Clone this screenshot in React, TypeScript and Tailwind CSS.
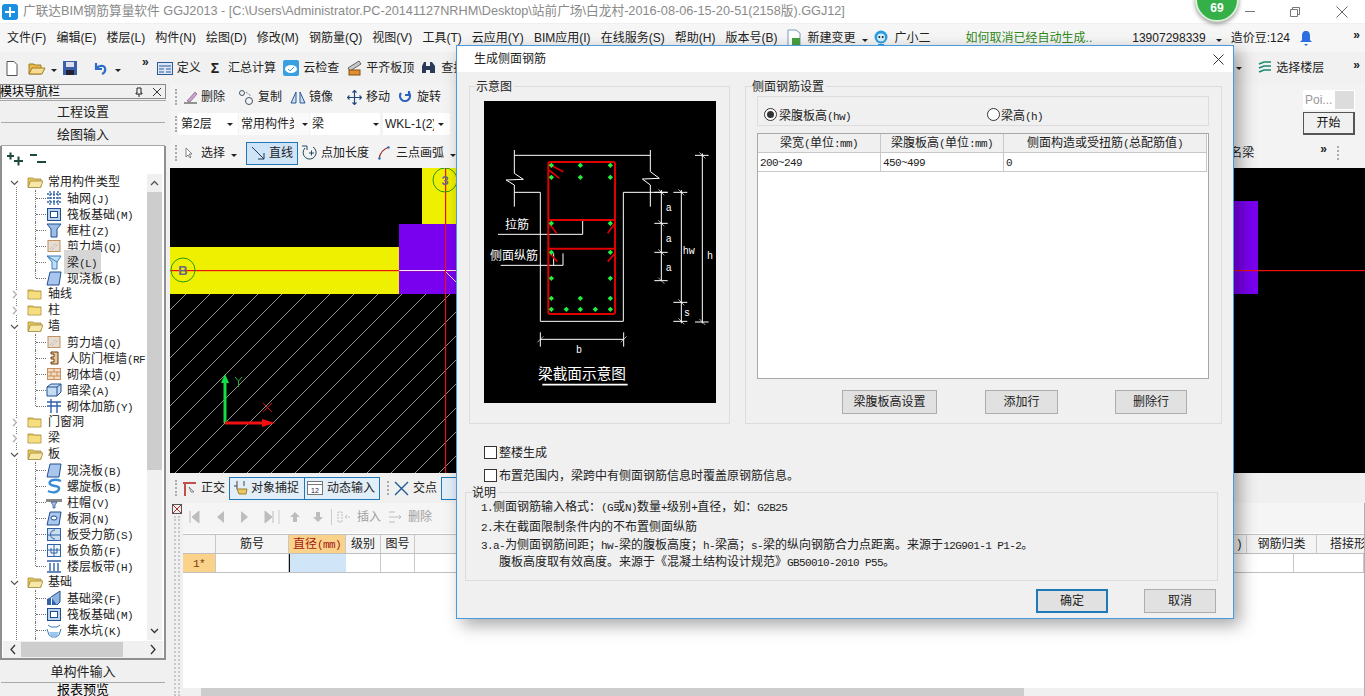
import * as React from 'react';

const SANS = "[font-family:'Liberation_Sans','Noto_Sans_CJK_SC',sans-serif]";
const MONO = "[font-family:'Liberation_Mono','Noto_Sans_CJK_SC',monospace]";

// CJK at 12px, latin half-width like SimSun in the original
function Sim({ text }: { text: string }) {
    const parts = text.split(/([\x00-\x7f]+)/).filter(Boolean);
    return (
        <span className="whitespace-pre text-[12px] leading-4">
            {parts.map((p, i) =>
                /^[\x00-\x7f]/.test(p) ? (
                    <span key={i} className={`${MONO} text-[11px] tracking-[-0.6px]`}>{p}</span>
                ) : (
                    <span key={i}>{p}</span>
                )
            )}
        </span>
    );
}

function Ic({ children, w = 16, h = 16 }: { children: React.ReactNode; w?: number; h?: number }) {
    return (
        <svg width={w} height={h} viewBox={`0 0 ${w} ${h}`} className="shrink-0" fill="none">
            {children}
        </svg>
    );
}

function Caret() {
    return <span className="inline-block w-0 h-0 border-x-[3px] border-x-transparent border-t-[3px] border-t-[#222] shrink-0" />;
}

function Sep() {
    return <span className="w-px h-[20px] bg-[#c4c4c4] shrink-0" />;
}

function Grip() {
    return <span className="w-[2px] h-[16px] shrink-0 border-l-2 border-dotted border-[#aaa]" />;
}

function Chevrons() {
    return <span className={`${SANS} text-[12px] font-bold leading-none text-[#222]`}>»</span>;
}

function Folder({ open }: { open?: boolean }) {
    return (
        <Ic>
            <path d="M1 4h5l1 1h7v8H1z" fill="#e8c65a" stroke="#a08838" strokeWidth="0.8" />
            {open ? (
                <path d="M3.5 7H16l-2.5 6.5H1z" fill="#f7e8a8" stroke="#a08838" strokeWidth="0.8" />
            ) : (
                <rect x="1.5" y="6" width="12" height="6.5" fill="#f6dd80" />
            )}
        </Ic>
    );
}

function TreeIcon({ kind }: { kind: string }) {
    const b = '#2f62a8';
    switch (kind) {
        case 'grid':
            return <Ic><path d="M1 4h14M1 8h14M1 12h14M4 1v14M8 1v14M12 1v14" stroke={b} strokeWidth="1.3" strokeDasharray="2 1" /></Ic>;
        case 'raft':
            return <Ic><rect x="1.5" y="2.5" width="13" height="12" fill="#bcd3ee" stroke="#1f4f90" /><rect x="4.5" y="5.5" width="7" height="6" fill="#fff" stroke="#1f4f90" /></Ic>;
        case 'column':
            return <Ic><path d="M1 2h14l-4 5v8H5V7z" fill="#9dbde6" stroke="#1f4f90" /></Ic>;
        case 'wall':
            return <Ic><rect x="2" y="2.5" width="12" height="11" fill="#e8ddd2" stroke="#c09060" /><path d="M4 11l6-6M6 12l6-6" stroke="#aaa" strokeDasharray="1 1" /></Ic>;
        case 'beam':
            return <Ic><path d="M1 2h14l-4 6v7H6V8z" fill="#bfe0f2" stroke="#3a7cc0" /><path d="M1 2l10 6" stroke="#3a7cc0" /></Ic>;
        case 'slab':
            return <Ic><path d="M4 2h11l-2 13H1z" fill="#a9c6ee" stroke="#1f4f90" /></Ic>;
        case 'door':
            return <Ic><path d="M5 2h7v12H5v-2h3v-3H5V7h3V4H5z" fill="#e9c9a0" stroke="#6a3a10" /></Ic>;
        case 'brick':
            return <Ic><rect x="1.5" y="2.5" width="13" height="11" fill="#f4dcc0" stroke="#c89060" /><path d="M2 6h12M2 10h12M8 3v3M5 6v4M11 6v4M8 10v3" stroke="#c89060" /></Ic>;
        case 'dark':
            return <Ic><path d="M1 5l4-3h10v8l-4 4H1z" fill="#c6dcf2" stroke="#1f4f90" /><path d="M1 5h10v9M11 5l4-3" stroke="#1f4f90" /></Ic>;
        case 'bar':
            return <Ic><path d="M1 4h14M1 8h14M5 1v14M11 4v11" stroke={b} strokeWidth="1.4" /></Ic>;
        case 'spiral':
            return <Ic><path d="M15 3C8 0 2 3 4 6s10 1 9 5-7 4-11 2" stroke="#3a8cd8" strokeWidth="2.4" /></Ic>;
        case 'cap':
            return <Ic><path d="M0 5h16v3H0z" fill="#8a8a8a" /><path d="M5 8h6l-2 3v3H7v-3z" fill="#a8c4e0" stroke="#1f4f90" strokeWidth="0.7" /></Ic>;
        case 'hole':
            return <Ic><path d="M4 2h11l-2 13H1z" fill="#a9c6ee" stroke="#1f4f90" /><ellipse cx="8" cy="8" rx="3" ry="2" fill="#fff" stroke="#1f4f90" /></Ic>;
        case 'sbar':
            return <Ic><rect x="1.5" y="2.5" width="13" height="12" fill="#c9dcf0" stroke="#2f62a8" /><path d="M2 9h12M9 4a3 3 0 1 0 0 9" stroke="#2f62a8" /></Ic>;
        case 'neg':
            return <Ic><rect x="1.5" y="2.5" width="13" height="12" fill="#eef4fb" stroke="#2f62a8" /><path d="M2 8h12M8 3v11M5 6v5h6V6" stroke="#2f62a8" /></Ic>;
        case 'band':
            return <Ic><path d="M1 3h14M1 14h14M4 5v8M8 5v8M12 5v8" stroke={b} strokeWidth="1.4" /></Ic>;
        case 'fbeam':
            return <Ic><path d="M1 15V9l4-2v8zM6 15V8l3-2 2 2v7z" fill="#2f62a8" /><path d="M5 7l9-6v11l-3 3" fill="#8fb4e0" stroke="#1f4f90" /></Ic>;
        default:
            return <Ic><path d="M2 3l3 2h6l3-2M1 7l2 6 3 2h4l3-2 2-6" stroke="#3a7cc0" /><path d="M3 10h10l-2 4H5z" fill="#9cc6ee" /></Ic>;
    }
}

type Node = { label: string; open?: boolean; items?: [string, string][] };

const tree: Node[] = [
    {
        label: '常用构件类型', open: true, items: [
            ['grid', '轴网(J)'], ['raft', '筏板基础(M)'], ['column', '框柱(Z)'],
            ['wall', '剪力墙(Q)'], ['beam', '梁(L)'], ['slab', '现浇板(B)'],
        ],
    },
    { label: '轴线' },
    { label: '柱' },
    {
        label: '墙', open: true, items: [
            ['wall', '剪力墙(Q)'], ['door', '人防门框墙(RF'], ['brick', '砌体墙(Q)'],
            ['dark', '暗梁(A)'], ['bar', '砌体加筋(Y)'],
        ],
    },
    { label: '门窗洞' },
    { label: '梁' },
    {
        label: '板', open: true, items: [
            ['slab', '现浇板(B)'], ['spiral', '螺旋板(B)'], ['cap', '柱帽(V)'], ['hole', '板洞(N)'],
            ['sbar', '板受力筋(S)'], ['neg', '板负筋(F)'], ['band', '楼层板带(H)'],
        ],
    },
    {
        label: '基础', open: true, items: [
            ['fbeam', '基础梁(F)'], ['raft', '筏板基础(M)'], ['pit', '集水坑(K)'], ['cap', '柱墩(Y)'],
        ],
    },
];

function Tree() {
    return (
        <div className="relative flex-1 overflow-hidden text-[#222]">
            <span className="absolute left-[14px] top-[12px] bottom-0 border-l border-dotted border-[#777]" />
            {tree.map((n) => (
                <div key={n.label}>
                    <div className="relative flex items-center h-4">
                        <span className="w-[9px] ml-[8px] flex justify-center bg-white z-10">
                            <svg width="9" height="9" viewBox="0 0 9 9" fill="none">
                                {n.open
                                    ? <path d="M1 3l3.5 3.5L8 3" stroke="#555" strokeWidth="1.2" />
                                    : <path d="M3 1l3.5 3.5L3 8" stroke="#aaa" strokeWidth="1.2" />}
                            </svg>
                        </span>
                        <span className="ml-[8px] mr-[5px]"><Folder open={n.open} /></span>
                        <Sim text={n.label} />
                    </div>
                    {n.items?.map(([kind, label], i) => {
                        const last = i === (n.items?.length ?? 0) - 1;
                        return (
                            <div key={label + i} className="relative flex items-center h-4 pl-[44px]">
                                <span className={`absolute left-[33px] top-0 border-l border-dotted border-[#777] ${last ? 'h-2' : 'h-4'}`} />
                                <span className="absolute left-[34px] top-2 w-[10px] border-t border-dotted border-[#777]" />
                                <TreeIcon kind={kind} />
                                <span className={`ml-[2px] pl-[3px] pr-[4px] ${label === '梁(L)' ? 'bg-[#d6d6d6]' : ''}`}>
                                    <Sim text={label} />
                                </span>
                            </div>
                        );
                    })}
                </div>
            ))}
        </div>
    );
}

function PanelButton({ children }: { children: React.ReactNode }) {
    return (
        <div className="h-[22px] mx-[1px] flex items-center justify-center bg-[#f0f0f0] border-b border-[#a8a8a8] text-[13px] text-[#222]">
            {children}
        </div>
    );
}

function LeftPanel() {
    return (
        <aside className={`w-[166px] shrink-0 flex flex-col ${SANS}`}>
            <div className="h-[15px] flex items-center border border-[#8a8a8a] bg-[#f0f0f0] text-[12px] leading-none">
                <span className="flex-1 -ml-[1px]">模块导航栏</span>
                <svg width="8" height="10" viewBox="0 0 8 10" className="mr-[10px]"><path d="M2 1h4v5h1v1H1V6h1zM4 7v3" stroke="#222" fill="none" /></svg>
                <svg width="8" height="8" viewBox="0 0 8 8" className="mr-[4px]"><path d="M0 0l8 8M8 0L0 8" stroke="#333" /></svg>
            </div>
            <div className="mt-[1px] border-t border-[#a8a8a8]">
                <PanelButton>工程设置</PanelButton>
                <div className="h-[1px]" />
                <PanelButton>绘图输入</PanelButton>
            </div>
            <div className="flex-1 flex flex-col border-x-2 border-b-2 border-[#8f8f8f] border-t-0 min-h-0 bg-white">
                <div className="h-[28px] flex items-center gap-[6px] pl-[5px] pb-[4px] shrink-0">
                    <svg width="17" height="15" viewBox="0 0 17 15"><path d="M0 5h7M3.5 1.5v7M7 10h9M11.5 5.5v9" stroke="#1d4a3a" strokeWidth="2" /></svg>
                    <svg width="16" height="11" viewBox="0 0 16 11"><path d="M0 2h7M7 9h9" stroke="#1d4a3a" strokeWidth="2" /></svg>
                </div>
                <div className="flex-1 flex min-h-0">
                    <Tree />
                    <div className="w-[15px] mr-[2px] bg-[#f0f0f0] flex flex-col items-center">
                        <svg width="9" height="18" viewBox="0 0 9 18" className="shrink-0"><path d="M1 11l3.5-3.5L8 11" stroke="#555" fill="none" strokeWidth="1.3" /></svg>
                        <div className="w-full h-[278px] bg-[#cdcdcd]" />
                        <div className="flex-1" />
                        <svg width="9" height="18" viewBox="0 0 9 18" className="shrink-0"><path d="M1 7l3.5 3.5L8 7" stroke="#333" fill="none" strokeWidth="1.3" /></svg>
                    </div>
                </div>
                <div className="h-[17px] shrink-0 flex items-center bg-[#f0f0f0] mx-[1px] mt-[1px]">
                    <svg width="18" height="17" viewBox="0 0 18 17"><path d="M12 4l-4 4.5 4 4.5" stroke="#333" fill="none" strokeWidth="1.3" /></svg>
                    <div className="w-[102px] h-[15px] bg-[#cdcdcd]" />
                    <div className="flex-1" />
                    <svg width="18" height="17" viewBox="0 0 18 17"><path d="M6 4l4 4.5-4 4.5" stroke="#333" fill="none" strokeWidth="1.3" /></svg>
                </div>
            </div>
            <div className="h-[1px]" />
            <PanelButton>单构件输入</PanelButton>
            <div className="h-[13px] mx-[1px] bg-[#f0f0f0] flex justify-center text-[13px] leading-[14px] overflow-hidden">报表预览</div>
        </aside>
    );
}

function TopBars() {
    const menus = ['文件(F)', '编辑(E)', '楼层(L)', '构件(N)', '绘图(D)', '修改(M)', '钢筋量(Q)', '视图(V)', '工具(T)', '云应用(Y)', 'BIM应用(I)', '在线服务(S)', '帮助(H)', '版本号(B)'];
    return (
        <>
            {/* Title bar */}
            <div className={`h-[23px] bg-white flex items-center ${SANS}`}>
                <span className="ml-[2px] w-[16px] h-[16px] rounded-[3px] bg-[#1c8fe0] flex items-center justify-center">
                    <svg width="12" height="12" viewBox="0 0 12 12"><path d="M6 1v10M1 6h10" stroke="#fff" strokeWidth="2" /></svg>
                </span>
                <span className="ml-[5px] text-[12.7px] text-[#8a8a8a] whitespace-nowrap">广联达BIM钢筋算量软件 GGJ2013 - [C:\Users\Administrator.PC-20141127NRHM\Desktop\站前广场\白龙村-2016-08-06-15-20-51(2158版).GGJ12]</span>
                <div className="ml-auto flex items-center">
                    <span className="w-[10px] border-t border-[#777]" />
                    <svg width="10" height="10" viewBox="0 0 10 10" className="ml-[35px]"><path d="M.5 2.5h7v7h-7zM2.5 2.5v-2h7v7h-2" stroke="#777" fill="none" /></svg>
                    <svg width="12" height="12" viewBox="0 0 12 12" className="ml-[36px] mr-[17px]"><path d="M.5.5l11 11M11.5.5l-11 11" stroke="#666" /></svg>
                </div>
            </div>
            {/* Menu bar */}
            <div className={`h-[28px] mt-[1px] bg-[#f6f6f6] flex items-center pl-[7px] text-[12px] text-[#222] whitespace-nowrap ${SANS}`}>
                <div className="flex items-center gap-[10.1px]">
                    {menus.map((m) => <span key={m}>{m}</span>)}
                </div>
                <svg width="16" height="18" viewBox="0 0 16 18" className="ml-[8px]"><path d="M2 1h8l4 3v13H2z" fill="#fff" stroke="#7a9cc0" /><rect x="6" y="9" width="8" height="8" fill="#4aa040" /></svg>
                <span className="ml-[6px]">新建变更</span>
                <span className="ml-[6px]"><Caret /></span>
                <svg width="16" height="16" viewBox="0 0 16 16" className="ml-[5px]"><circle cx="8" cy="7" r="6.5" fill="#2a9ee0" /><circle cx="8" cy="7.5" r="4" fill="#d8f0fa" /><circle cx="6.3" cy="7" r="1" fill="#123" /><circle cx="9.7" cy="7" r="1" fill="#123" /><path d="M5 14h6v2H5z" fill="#2a9ee0" /></svg>
                <span className="ml-[6px]">广小二</span>
                <span className="ml-[35px] text-[#2f8a18]">如何取消已经自动生成..</span>
                <span className="ml-[40px]">13907298339</span>
                <span className="ml-[10px]"><Caret /></span>
                <span className="ml-[9px]">造价豆:124</span>
                <svg width="14" height="17" viewBox="0 0 14 17" className="ml-[9px]"><path d="M7 1c3 0 4 2 4 5v4l2 2H1l2-2V6c0-3 1-5 4-5z" fill="#2a6ee0" /><path d="M5 14h4l-2 2z" fill="#2a6ee0" /></svg>
                <span className="ml-auto mr-[5px] -mt-[6px]"><Chevrons /></span>
            </div>
            {/* Standard toolbar */}
            <div className={`h-[30px] mt-[1px] bg-[#f1f1f1] flex items-center text-[12px] text-[#222] whitespace-nowrap ${SANS}`}>
                <svg width="12" height="15" viewBox="0 0 12 15" className="ml-[6px]"><path d="M1 .5h7l3 3v11H1z" fill="#fff" stroke="#555" /></svg>
                <svg width="18" height="15" viewBox="0 0 18 15" className="ml-[10px]"><path d="M1 3h5l1 1h6v9H1z" fill="#e8b84a" stroke="#a07c28" /><path d="M4 7h13l-3 6H1z" fill="#f5dc90" stroke="#a07c28" /></svg>
                <span className="ml-[5px]"><Caret /></span>
                <svg width="14" height="14" viewBox="0 0 14 14" className="ml-[6px]"><rect width="14" height="14" fill="#3a5ea8" /><rect x="3" y="1" width="8" height="5" fill="#dde" /><rect x="3" y="9" width="8" height="5" fill="#223" /></svg>
                <span className="ml-[7px]"><Sep /></span>
                <svg width="13" height="13" viewBox="0 0 13 13" className="ml-[10px]"><path d="M2 1v6h6M2.5 6.5C5 3 10 3 11 6c.8 3-1 5-3 6" stroke="#2f6ec8" strokeWidth="2.2" fill="none" /></svg>
                <span className="ml-[8px]"><Caret /></span>
                <span className="ml-[21px] -mt-[12px]"><Chevrons /></span>
                <svg width="16" height="13" viewBox="0 0 16 13" className="ml-[8px]"><rect x=".5" y=".5" width="15" height="12" fill="#dce6f4" stroke="#2a5a98" /><path d="M2 4h12M2 7h5M2 10h5M9 7h5M9 10h5" stroke="#2a5a98" /></svg>
                <span className="ml-[4px]">定义</span>
                <span className="ml-[10px] font-bold text-[14px] leading-none">Σ</span>
                <span className="ml-[9px]">汇总计算</span>
                <svg width="16" height="16" viewBox="0 0 16 16" className="ml-[7px]"><rect width="16" height="16" rx="2" fill="#38a0e0" /><ellipse cx="8" cy="9" rx="6" ry="4" fill="#fff" /><path d="M5 9l2 2 4-4" stroke="#38a0e0" fill="none" /></svg>
                <span className="ml-[4px]">云检查</span>
                <svg width="15" height="16" viewBox="0 0 15 16" className="ml-[8px]"><path d="M1 8l11-7 2 3L3 11z" fill="#c8c8c8" stroke="#666" /><rect x="2" y="10" width="11" height="5" fill="#e09030" stroke="#805010" /></svg>
                <span className="ml-[4px]">平齐板顶</span>
                <svg width="15" height="14" viewBox="0 0 15 14" className="ml-[7px]"><path d="M1 12V5l2-4h2v11zM9 12V1h2l3 4v7zM5 5h4v4H5z" fill="#2a3a5a" /></svg>
                <span className="ml-[5px]">查找</span>
                <div className="ml-auto flex items-center">
                    <Caret />
                    <span className="ml-[8px]"><Sep /></span>
                    <svg width="14" height="14" viewBox="0 0 14 14" className="ml-[8px]"><path d="M1 3l5-2h7M1 7l5-2h7M1 11l5-2h7" stroke="#1a8a70" strokeWidth="1.6" fill="none" /></svg>
                    <span className="ml-[4px]">选择楼层</span>
                    <span className="ml-[29px] mr-[5px] -mt-[6px]"><Chevrons /></span>
                </div>
            </div>
        </>
    );
}

function DrawRows() {
    return (
        <div className={`text-[12px] text-[#222] whitespace-nowrap ${SANS}`}>
            <div className="h-[26px] flex items-center bg-[#f3f3f3] pl-[5px]">
                <Grip />
                <svg width="15" height="14" viewBox="0 0 15 14" className="ml-[6px]"><path d="M1 13h13" stroke="#333" /><path d="M4 11L12 2l2 2-7 8z" fill="#c9a0d8" stroke="#755" strokeWidth="0.6" /></svg>
                <span className="ml-[3px]">删除</span>
                <span className="ml-[8px]"><Sep /></span>
                <svg width="16" height="15" viewBox="0 0 16 15" className="ml-[5px]"><circle cx="4" cy="3" r="2.5" stroke="#456" fill="none" /><circle cx="11" cy="11" r="3.5" stroke="#456" fill="none" /><path d="M8 2l5 4" stroke="#456" strokeDasharray="1 1" /></svg>
                <span className="ml-[4px]">复制</span>
                <svg width="16" height="14" viewBox="0 0 16 14" className="ml-[8px]"><path d="M1 13L6 2v11zM10 2l5 11h-5z" fill="#cfe0f2" stroke="#2a5a98" /></svg>
                <span className="ml-[3px]">镜像</span>
                <span className="ml-[7px]"><Sep /></span>
                <svg width="15" height="15" viewBox="0 0 15 15" className="ml-[7px]"><path d="M7.5 0v15M0 7.5h15M5.5 2.5l2-2 2 2M5.5 12.5l2 2 2-2M2.5 5.500l-2 2 2 2M12.5 5.500l2 2-2 2" stroke="#234a80" strokeWidth="1.2" fill="none" /></svg>
                <span className="ml-[4px]">移动</span>
                <svg width="13" height="13" viewBox="0 0 13 13" className="ml-[9px]"><path d="M2 2a5 5 0 1 0 8 0M10 0v4h-4" stroke="#2a62c0" strokeWidth="2.2" fill="none" /></svg>
                <span className="ml-[5px]">旋转</span>
                <span className="ml-[7px]"><Sep /></span>
            </div>
            <div className="h-[28px] flex items-center bg-[#f3f3f3] pl-[5px]">
                <Grip />
                <div className="ml-[1px] w-[60px] h-[22px] bg-white flex items-center pl-[3px] pr-[5px] justify-between"><span>第2层</span><Caret /></div>
                <div className="ml-[1px] w-[70px] h-[22px] bg-[#fafafa] flex items-center pl-[2px] pr-[1px] justify-between"><span className="w-[53px] overflow-hidden">常用构件类型</span><Caret /></div>
                <div className="ml-[1px] w-[70px] h-[22px] bg-white flex items-center pl-[2px] pr-[1px] justify-between"><span>梁</span><Caret /></div>
                <div className="ml-[3px] w-[67px] h-[22px] bg-white flex items-center pl-[2px] pr-[6px] justify-between"><span className="w-[49px] overflow-hidden">WKL-1(2)</span><Caret /></div>
            </div>
            <div className="h-[30px] flex items-center bg-[#f3f3f3] pl-[5px]">
                <Grip />
                <svg width="8" height="12" viewBox="0 0 8 12" className="ml-[8px]"><path d="M1 1v9l2-2 2 3 1-1-2-3h3z" fill="#fff" stroke="#666" strokeWidth="0.8" /></svg>
                <span className="ml-[8px]">选择</span>
                <span className="ml-[6px]"><Caret /></span>
                <span className="ml-[7px]"><Sep /></span>
                <div className="ml-[2px] w-[52px] h-[23px] bg-[#cfe5f7] border border-[#1f78b8] flex items-center pl-[4px]">
                    <svg width="14" height="14" viewBox="0 0 14 14"><path d="M1 1l12 12M13 7v6H7" stroke="#1f3a5a" fill="none" /></svg>
                    <span className="ml-[4px]">直线</span>
                </div>
                <svg width="16" height="16" viewBox="0 0 16 16" className="ml-[3px]"><path d="M4 3a6.5 6.5 0 1 0 8-1M1 1h5v4M8 8h5M10.5 5.5v5" stroke="#234a60" fill="none" /></svg>
                <span className="ml-[4px]">点加长度</span>
                <svg width="12" height="14" viewBox="0 0 12 14" className="ml-[9px]"><path d="M1 13C2 7 5 3 11 1" stroke="#a03028" strokeWidth="1.3" fill="none" /><circle cx="1.5" cy="12.5" r="1.2" fill="#2a70c0" /><circle cx="10.5" cy="1.5" r="1.2" fill="#2a70c0" /></svg>
                <span className="ml-[6px]">三点画弧</span>
                <span className="ml-[6px]"><Caret /></span>
                <div className="ml-auto flex items-center">
                    <span className="mr-[66px]">名梁</span>
                    <span className="-mt-[8px]"><Chevrons /></span>
                    <span className="ml-[10px] mr-[26px]"><Grip /></span>
                </div>
            </div>
        </div>
    );
}

function Canvas() {
    return (
        <div className="h-[305px] bg-black">
            <svg viewBox="170 168 1195 305" className="block w-full h-full">
                <defs>
                    <pattern id="hatch" width="24" height="24" patternUnits="userSpaceOnUse">
                        <path d="M0 24L24 0" stroke="#b8b8b8" strokeWidth="0.8" />
                    </pattern>
                </defs>
                <rect x="170" y="294" width="287" height="179" fill="url(#hatch)" />
                <rect x="422" y="168" width="35" height="56" fill="#efef00" />
                <rect x="170" y="247" width="229" height="47" fill="#efef00" />
                <rect x="399" y="224" width="58" height="70" fill="#7a00f0" />
                <rect x="1233" y="201" width="25" height="93" fill="#7a00f0" />
                <rect x="170" y="270" width="1195" height="1.2" fill="#f01010" />
                <path d="M399 270.5H457M445 271l12 12" stroke="#f4e8f4" />
                <rect x="445" y="168" width="1.2" height="305" fill="#f01010" />
                <circle cx="183" cy="270" r="12" stroke="#2a9a10" fill="none" />
                <text x="183" y="275" fontSize="13" fill="#6a6a80" textAnchor="middle" fontFamily="Liberation Sans" fontWeight="bold">B</text>
                <circle cx="445" cy="180" r="12" stroke="#2a9a10" fill="none" />
                <text x="445" y="185" fontSize="13" fill="#6a6a80" textAnchor="middle" fontFamily="Liberation Sans" fontWeight="bold">3</text>
                <path d="M225 423V380" stroke="#10e040" strokeWidth="3" />
                <path d="M221 383l4-9 4 9z" fill="#10e040" />
                <path d="M225 423h44" stroke="#f01010" strokeWidth="3" />
                <path d="M262 419l13 4-13 4z" fill="#f01010" />
                <path d="M235 377l3.500 4 3.500-4M238.500 381v6" stroke="#20b040" fill="none" />
                <path d="M263 403l9 9M272 403l-9 9" stroke="#d01010" />
            </svg>
        </div>
    );
}

function SnapBar() {
    return (
        <div className={`h-[30px] flex items-center bg-[#f0f0f0] pl-[5px] text-[12px] text-[#222] whitespace-nowrap ${SANS}`}>
            <Grip />
            <svg width="15" height="15" viewBox="0 0 15 15" className="ml-[5px]"><path d="M1 2h13M3 2v13" stroke="#c0504a" strokeWidth="2" /><path d="M7 6l5 5-3 0z" fill="#ddd" stroke="#555" strokeWidth="0.6" /></svg>
            <span className="ml-[4px]">正交</span>
            <div className="ml-[4px] w-[76px] h-[23px] bg-[#e2eef8] border border-[#1f78b8] flex items-center pl-[3px]">
                <svg width="16" height="16" viewBox="0 0 16 16"><path d="M4 1v8M11 1v5M1 6h3" stroke="#444" /><path d="M4 9h10l-1 5H6z" fill="#e8c860" stroke="#a08030" /></svg>
                <span className="ml-[2px]">对象捕捉</span>
            </div>
            <div className="w-[75px] h-[23px] bg-[#e2eef8] border border-l-0 border-[#1f78b8] flex items-center pl-[2px]">
                <svg width="16" height="14" viewBox="0 0 16 14"><rect x=".5" y=".5" width="15" height="13" fill="#fff" stroke="#777" /><path d="M1 3.500h14" stroke="#777" /><text x="4" y="12" fontSize="7" fill="#224">12</text></svg>
                <span className="ml-[4px]">动态输入</span>
            </div>
            <span className="ml-[7px]"><Grip /></span>
            <svg width="15" height="15" viewBox="0 0 15 15" className="ml-[5px]"><path d="M1 1l13 13M14 1L1 14" stroke="#1f5a98" strokeWidth="1.4" /></svg>
            <span className="ml-[4px]">交点</span>
            <div className="ml-[4px] w-[30px] h-[23px] bg-[#e2eef8] border border-[#1f78b8]" />
        </div>
    );
}

function Th({ w, children, on }: { w: string; children?: React.ReactNode; on?: boolean }) {
    return (
        <div className={`${w} shrink-0 h-full flex items-center justify-center border-r border-[#c8c8c8] ${on ? 'bg-[#fbd28a] text-[#a01818]' : ''}`}>
            {children}
        </div>
    );
}

function GridArea() {
    const g = '#bdbdbd';
    return (
        <div className={`relative flex-1 flex min-h-0 bg-white ${SANS}`}>
            <div className="w-[13px] shrink-0 bg-[#f0f0f0] flex flex-col items-center pt-[1px]">
                <svg width="10" height="10" viewBox="0 0 10 10"><rect x=".5" y=".5" width="9" height="9" fill="#eee" stroke="#555" /><path d="M1 1l8 8M9 1L1 9" stroke="#b03030" /></svg>
                <span className="flex-1 w-[6px] mt-[2px] border-x-2 border-dotted border-[#c8c8c8]" />
            </div>
            <div className="flex-1 flex flex-col min-w-0 border-r border-[#b0b0b0]">
                <div className="h-[30px] shrink-0 flex items-center bg-[#f5f5f5] text-[12px] text-[#a0a0a0] pb-[2px]">
                    <svg width="138" height="14" viewBox="0 0 138 14" className="ml-[6px]">
                        <path d="M1 1v12M10 1L3 7l7 6z" fill={g} stroke={g} />
                        <path d="M35 1l-7 6 7 6z" fill={g} />
                        <path d="M52 1l7 6-7 6z" fill={g} />
                        <path d="M76 1l7 6-7 6zM84 1v12" fill={g} stroke={g} />
                        <path d="M90 0v14" stroke="#ccc" />
                        <path d="M104 12V7h-3l5-5 5 5h-3v5zM127 2v5h-3l5 5 5-5h-3V2z" fill={g} />
                    </svg>
                    <span className="w-px h-4 bg-[#ccc] ml-[4px]" />
                    <svg width="15" height="14" viewBox="0 0 15 14" className="ml-[5px]"><path d="M1 2h4v10H1zM8 7h6M10 5L8 7l2 2" stroke={g} fill="none" strokeDasharray="2 1" /></svg>
                    <span className="ml-[5px]">插入</span>
                    <svg width="15" height="14" viewBox="0 0 15 14" className="ml-[7px]"><path d="M1 2h6M1 7h12M1 12h6M11 5l2 2-2 2" stroke={g} fill="none" /></svg>
                    <span className="ml-[5px]">删除</span>
                </div>
                <div className="h-[20px] mt-[1px] shrink-0 flex items-center border-y border-[#c0c0c0] bg-[#f4f4f4] text-[12px] text-[#222]">
                    <Th w="w-[33px]" />
                    <Th w="w-[73px]">筋号</Th>
                    <Th w="w-[57px]" on><Sim text="直径(mm)" /></Th>
                    <Th w="w-[35px]">级别</Th>
                    <Th w="w-[34px]">图号</Th>
                    <div className="flex-1 h-full" />
                    <Th w="w-[14px]">)</Th>
                    <Th w="w-[70px]">钢筋归类</Th>
                    <div className="w-[47px] shrink-0 overflow-hidden pl-[13px] whitespace-nowrap">搭接形式</div>
                </div>
                <div className="h-[19px] shrink-0 flex items-center border-b border-[#c0c0c0] text-[12px]">
                    <Th w="w-[33px]" on><span className="text-[#7a3a10]"><Sim text="1*" /></span></Th>
                    <Th w="w-[73px]" />
                    <div className="w-[57px] shrink-0 h-full bg-[#d0e6f8] border-l border-[#111]" />
                    <Th w="w-[35px]" />
                    <Th w="w-[34px]" />
                    <div className="flex-1 h-full" />
                    <Th w="w-[14px]" />
                    <Th w="w-[70px]" />
                </div>
                <div className="flex-1" />
                <div className="h-[8px] shrink-0 flex bg-[#f0f0f0]">
                    <span className="w-[18px]" />
                    <div className="w-[823px] bg-[#cdcdcd]" />
                </div>
            </div>
        </div>
    );
}

function Group({ title, className, children }: { title: string; className: string; children?: React.ReactNode }) {
    return (
        <div className={`relative border border-[#dcdcdc] ${className}`}>
            <span className="absolute -top-[8px] left-[6px] bg-[#f0f0f0] pr-[2px] text-[12px] leading-4 text-[#222]">{title}</span>
            {children}
        </div>
    );
}

function BeamDiagram() {
    const dots = [[244, 271], [331, 271], [421, 271], [244, 307], [331, 307], [421, 307], [244, 445], [421, 445], [244, 532], [421, 532], [244, 610], [421, 610], [244, 670], [331, 670], [421, 670], [244, 703], [289, 703], [331, 703], [376, 703], [421, 703]];
    const cjk = 'Noto Sans CJK SC';
    const latin = 'Liberation Mono';
    return (
        <svg viewBox="42 78 696 906" className="block w-[232px] h-[302px] bg-black shrink-0">
            <g stroke="#fff" strokeWidth="3" fill="none">
                <path d="M133 241H541" />
                <path d="M133 225V295L160 313L108 315L133 330V395" />
                <path d="M541 225V290L568 310L517 312L541 330V395" />
                <path d="M133 352H211V739H460V352H593" />
                <path d="M84 478H338V435M92 571H279V535M251 571V535" />
                <path d="M574 345V617M553 352H593M553 445H593M553 532H593M553 617H593" />
                <path d="M634 345V745M610 352H652M610 682H652M610 739H652" />
                <path d="M697 235V745M675 241H716M675 741H716" />
                <path d="M211 793H461M211 772V815M461 772V815" />
                <path d="M565 343L583 361M565 436L583 454M565 523L583 541M565 608L583 626M625 343L643 361M625 673L643 691M625 730L643 748M688 232L706 250M688 732L706 750M202 802L220 784M452 802L470 784" strokeWidth="2" />
            </g>
            <g stroke="#e00000" strokeWidth="6" fill="none">
                <rect x="235" y="261" width="200" height="456" rx="6" />
                <path d="M235 435H435M235 521H435" />
                <path d="M237 268L280 290M237 285L268 310M237 445L260 475M435 445L413 475M240 535L262 560M435 535L413 560" strokeWidth="5" />
            </g>
            {dots.map(([x, y]) => (
                <path key={`${x}-${y}`} d={`M${x - 8} ${y}L${x} ${y - 8}L${x + 8} ${y}L${x} ${y + 8}Z`} fill="#20f040" />
            ))}
            <g fill="#fff" fontFamily={cjk} fontSize="36">
                <text x="105" y="463">拉筋</text>
                <text x="60" y="556">侧面纵筋</text>
                <text x="204" y="911" fontSize="44">梁截面示意图</text>
            </g>
            <g fill="#fff" fontFamily={latin} fontSize="30">
                <text x="587" y="409">a</text>
                <text x="587" y="502">a</text>
                <text x="587" y="589">a</text>
                <text x="638" y="537">hw</text>
                <text x="642" y="722">s</text>
                <text x="711" y="551">h</text>
                <text x="318" y="833">b</text>
            </g>
            <path d="M217 929H473" stroke="#fff" strokeWidth="5" />
        </svg>
    );
}

function DlgButton({ w, primary, children }: { w: string; primary?: boolean; children: React.ReactNode }) {
    return (
        <button className={`${w} h-[24px] bg-[#e1e1e1] text-[12px] text-[#222] ${primary ? 'border-2 border-[#1f78b8]' : 'border border-[#adadad]'}`}>
            {children}
        </button>
    );
}

function Dialog() {
    return (
        <div className={`absolute left-[456px] top-[45px] w-[778px] h-[574px] flex flex-col bg-[#f0f0f0] border border-[#4a9ae0] shadow-[6px_6px_16px_rgba(0,0,0,0.35)] text-[#222] ${SANS}`}>
            <div className="h-[26px] shrink-0 bg-white flex items-center justify-between pl-[17px] pr-[9px] text-[12px]">
                <span>生成侧面钢筋</span>
                <svg width="11" height="11" viewBox="0 0 11 11"><path d="M.5.5l10 10M10.500.5l-10 10" stroke="#333" /></svg>
            </div>
            <div className="flex pl-[12px] pt-[14px] gap-[15px] shrink-0">
                <Group title="示意图" className="w-[261px] h-[338px] pl-[14px] pt-[14px]">
                    <BeamDiagram />
                </Group>
                <Group title="侧面钢筋设置" className="w-[477px] h-[338px] pl-[11px] pt-[9px]">
                    <div className="w-[452px] h-[30px] border border-[#dcdcdc] pl-[6px] pt-[11px]">
                        <div className="flex items-center h-[13px]">
                            <span className="w-[13px] h-[13px] rounded-full border border-[#333] bg-white flex items-center justify-center"><span className="w-[7px] h-[7px] rounded-full bg-[#333]" /></span>
                            <span className="ml-[2px]"><Sim text="梁腹板高(hw)" /></span>
                            <span className="ml-[136px] w-[13px] h-[13px] rounded-full border border-[#333] bg-white" />
                            <span className="ml-[1px]"><Sim text="梁高(h)" /></span>
                        </div>
                    </div>
                    <div className="mt-[7px] w-[452px] h-[246px] bg-white border border-[#a8a8a8]">
                        <div className="flex h-[19px] bg-[#f0f0f0] border-b border-[#c8c8c8] w-[449px]">
                            <div className="w-[123px] flex items-center justify-center border-r border-[#c8c8c8]"><Sim text="梁宽(单位:mm)" /></div>
                            <div className="w-[123px] flex items-center justify-center border-r border-[#c8c8c8]"><Sim text="梁腹板高(单位:mm)" /></div>
                            <div className="flex-1 flex items-center justify-center border-r border-[#c8c8c8]"><Sim text="侧面构造或受扭筋(总配筋值)" /></div>
                        </div>
                        <div className="flex h-[19px] border-b border-[#c8c8c8] w-[449px]">
                            <div className="w-[123px] flex items-center pl-[2px] border-r border-[#c8c8c8]"><Sim text="200~249" /></div>
                            <div className="w-[123px] flex items-center pl-[2px] border-r border-[#c8c8c8]"><Sim text="450~499" /></div>
                            <div className="flex-1 flex items-center pl-[2px] border-r border-[#c8c8c8]"><Sim text="0" /></div>
                        </div>
                    </div>
                    <div className="flex mt-[11px] pl-[85px]">
                        <DlgButton w="w-[95px]">梁腹板高设置</DlgButton>
                        <span className="w-[48px]" />
                        <DlgButton w="w-[73px]">添加行</DlgButton>
                        <span className="w-[57px]" />
                        <DlgButton w="w-[72px]">删除行</DlgButton>
                    </div>
                </Group>
            </div>
            <div className="pl-[27px] mt-[20px] flex items-center h-4">
                <span className="w-[13px] h-[13px] border border-[#333] bg-white" />
                <span className="ml-[2px]"><Sim text="整楼生成" /></span>
            </div>
            <div className="pl-[27px] mt-[7px] flex items-center h-4">
                <span className="w-[13px] h-[13px] border border-[#333] bg-white" />
                <span className="ml-[2px]"><Sim text="布置范围内，梁跨中有侧面钢筋信息时覆盖原钢筋信息。" /></span>
            </div>
            <Group title="说明" className="ml-[8px] mt-[9px] w-[753px] h-[89px] pl-[15px] pt-[1px]">
                <div className="h-[18px]"><Sim text="1.侧面钢筋输入格式：(G或N)数量+级别+直径，如：G2B25" /></div>
                <div className="h-[19px] pt-[2px]"><Sim text="2.未在截面限制条件内的不布置侧面纵筋" /></div>
                <div className="h-[18px] pt-[1px]"><Sim text="3.a-为侧面钢筋间距；hw-梁的腹板高度；h-梁高；s-梁的纵向钢筋合力点距离。来源于12G901-1 P1-2。" /></div>
                <div className="h-[18px] pl-[18px]"><Sim text="腹板高度取有效高度。来源于《混凝土结构设计规范》GB50010-2010 P55。" /></div>
            </Group>
            <div className="flex justify-end gap-[36px] mt-[8px] pr-[17px]">
                <DlgButton w="w-[72px]" primary>确定</DlgButton>
                <DlgButton w="w-[72px]">取消</DlgButton>
            </div>
        </div>
    );
}

export default function App() {
    return (
        <div className="relative w-[1365px] h-[696px] overflow-hidden bg-[#f0f0f0] flex flex-col">
            <TopBars />
            <div className="flex-1 flex min-h-0 mt-[1px]">
                <LeftPanel />
                <div className="w-[4px] shrink-0" />
                <main className="flex-1 flex flex-col min-w-0">
                    <DrawRows />
                    <Canvas />
                    <SnapBar />
                    <GridArea />
                </main>
            </div>
            <Dialog />

            {/* Score badge */}
            <div className={`absolute left-[1195px] -top-[22px] w-[44px] h-[44px] rounded-full bg-[#35b048] border-2 border-[#d8efd8] shadow-[0_2px_4px_rgba(0,0,0,0.4)] flex items-end justify-center pb-[6px] text-white text-[12px] font-bold leading-none ${SANS}`}>
                69
            </div>

            {/* Floating start window */}
            <div className={`absolute left-[1303px] top-[90px] w-[52px] flex flex-col text-[12px] ${SANS}`}>
                <div className="h-[20px] bg-white flex items-center pl-[2px] text-[#999]">
                    Poi...
                    <span className="ml-auto mr-[1px] w-[19px] h-[18px] bg-[#dcdcdc]" />
                </div>
                <div className="mt-[2px] h-[23px] bg-[#f0f0f0] border border-[#555] border-r-2 border-b-2 flex items-center justify-center text-[#111]">开始</div>
            </div>
        </div>
    );
}
